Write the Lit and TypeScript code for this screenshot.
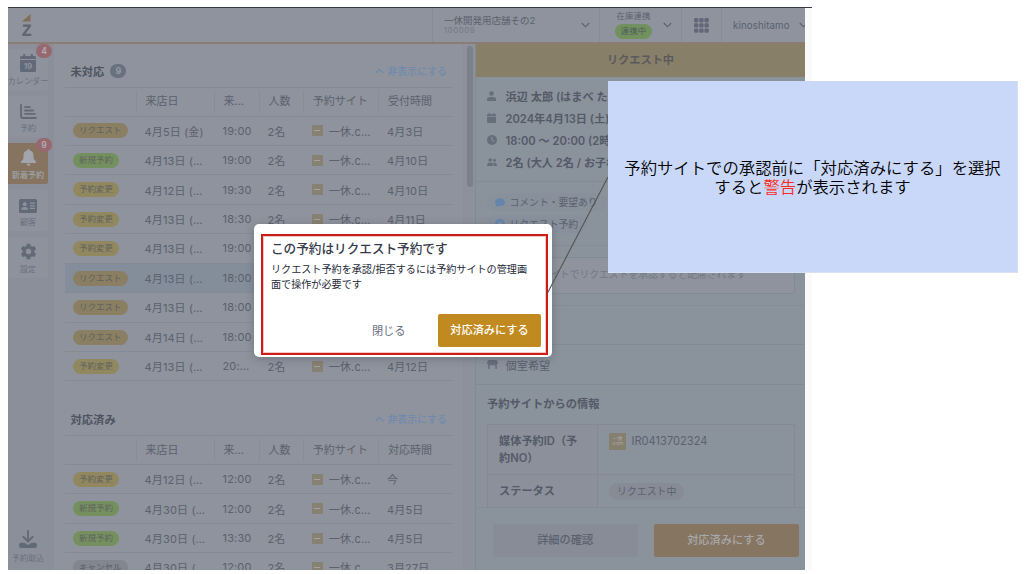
import { LitElement, html, css, svg } from "lit";
import { customElement } from "lit/decorators.js";
import { classMap } from "lit/directives/class-map.js";

type Row = { kind: string; date: string; time: string; at: string; active?: boolean };

const KIND: Record<string, string> = {
  リクエスト: "request",
  新規予約: "fresh",
  予約変更: "change",
  キャンセル: "cancel",
};

const OPEN_ROWS: Row[] = [
  { kind: "リクエスト", date: "4月5日 (金)", time: "19:00", at: "4月3日" },
  { kind: "新規予約", date: "4月13日 (…", time: "19:00", at: "4月10日" },
  { kind: "予約変更", date: "4月12日 (…", time: "19:30", at: "4月10日" },
  { kind: "予約変更", date: "4月13日 (…", time: "18:30", at: "4月11日" },
  { kind: "予約変更", date: "4月13日 (…", time: "19:00", at: "4月11日" },
  { kind: "リクエスト", date: "4月13日 (…", time: "18:00", at: "4月12日", active: true },
  { kind: "リクエスト", date: "4月13日 (…", time: "18:00", at: "4月12日" },
  { kind: "リクエスト", date: "4月14日 (…", time: "18:00", at: "4月12日" },
  { kind: "予約変更", date: "4月13日 (…", time: "20:…", at: "4月12日" },
];

const DONE_ROWS: Row[] = [
  { kind: "予約変更", date: "4月12日 (…", time: "12:00", at: "今" },
  { kind: "新規予約", date: "4月30日 (…", time: "12:00", at: "4月5日" },
  { kind: "新規予約", date: "4月30日 (…", time: "13:30", at: "4月5日" },
  { kind: "キャンセル", date: "4月30日 (…", time: "12:00", at: "3月27日" },
];

const icon = (w: number, h: number, box: string, body: unknown) =>
  html`<svg width=${w} height=${h} viewBox=${box} fill="currentColor">${body}</svg>`;

const chevron = (up = false) =>
  icon(
    9,
    6,
    "0 0 9 6",
    svg`<path d=${up ? "M.8 5 4.5 1.2 8.2 5" : "M.8 1 4.5 4.8 8.2 1"} fill="none" stroke="currentColor" stroke-width="1.1"/>`
  );

const calendarIcon = icon(
  16,
  18,
  "0 0 16 18",
  svg`<path d="M3.2 0h2v2h5.6V0h2v2h1.700Q16 2 16 3.500V5H0V3.500Q0 2 1.500 2h1.700zM0 6h16v10.500Q16 18 14.500 18h-13Q0 18 0 16.500z"/><text x="8" y="14.600" text-anchor="middle" font-family="Inter" font-size="8" font-weight="700" fill="#8d929d">19</text>`
);
const chartIcon = icon(
  17,
  15,
  "0 0 17 15",
  svg`<path d="M1 1v11q0 2 2 2h13M5 3.200h5M5 6.500h8M5 9.800h10" fill="none" stroke="currentColor" stroke-width="1.800" stroke-linecap="round"/>`
);
const bellIcon = icon(
  15,
  17,
  "0 0 15 17",
  svg`<path d="M7.500 0q1 0 1 1.200c2.600.5 4 2.400 4 5v3.300L15 12.700V14H0v-1.300l2.500-3.200V6.200c0-2.600 1.400-4.500 4-5Q6.500 0 7.500 0zM5.500 14.800h4q-.4 2-2 2t-2-2z"/>`
);
const cardIcon = icon(
  18,
  14,
  "0 0 18 14",
  svg`<rect width="18" height="14" rx="1.600"/><g fill="#8d929d"><circle cx="5.700" cy="5.200" r="1.900"/><path d="M2.300 10.800q0-2.800 3.400-2.800t3.400 2.800z"/><path d="M11 3.600h5v1.200h-5zM11 6.200h5v1.200h-5zM11 8.800h5V10h-5z"/></g>`
);
const gearIcon = icon(
  17,
  17,
  "0 0 24 24",
  svg`<path fill-rule="evenodd" d="M9.600 1h4.800l.7 3.300 2 1.100 3.200-1 2.400 4.100-2.500 2.300v2.400l2.500 2.300-2.400 4.100-3.200-1-2 1.100-.7 3.300H9.600l-.7-3.300-2-1.100-3.200 1-2.400-4.100 2.500-2.300v-2.400L1.300 8.500l2.400-4.100 3.200 1 2-1.100zM12 8.200a3.800 3.800 0 1 0 0 7.600 3.800 3.800 0 0 0 0-7.600z"/>`
);
const downloadIcon = icon(
  18,
  19,
  "0 0 18 19",
  svg`<path d="M9 1v10M4.300 6.800 9 11.400l4.700-4.600" fill="none" stroke="currentColor" stroke-width="1.900" stroke-linecap="round"/><path d="M2 12.800h3.400L9 15l3.600-2.200H16q2 0 2 2v1.200q0 2-2 2H2q-2 0-2-2v-1.200q0-2 2-2z"/>`
);
const personIcon = icon(
  9,
  10,
  "0 0 9 10",
  svg`<circle cx="4.500" cy="2.500" r="2.300"/><path d="M0 10V8.500Q0 6 3 6h3q3 0 3 2.500V10z"/>`
);
const dateIcon = icon(
  9,
  10,
  "0 0 9 10",
  svg`<path d="M1.500 0H3v1.200h3V0h1.500v1.200H9V3H0V1.200h1.500zM0 3.700h9V9q0 1-1 1H1Q0 10 0 9z"/>`
);
const clockIcon = icon(
  10,
  10,
  "0 0 10 10",
  svg`<circle cx="5" cy="5" r="5"/><path d="M5 2v3.200L7.200 6.500" fill="none" stroke="#8a929c" stroke-width="1"/>`
);
const peopleIcon = icon(
  10,
  8,
  "0 0 10 8",
  svg`<circle cx="3.200" cy="2" r="1.800"/><circle cx="7.500" cy="2.200" r="1.500"/><path d="M0 8q0-3.500 3.200-3.500T6.400 8zM7 8q0-2-1-3.200 4-.8 4 3.200z"/>`
);
const bubbleIcon = icon(
  10,
  9,
  "0 0 10 9",
  svg`<path d="M5 .3c2.800 0 5 1.700 5 3.900S7.800 8.100 5 8.100q-1 0-1.900-.3Q2 8.800.3 8.800 1.200 7.700 1.200 6.800 0 5.800 0 4.200C0 2 2.200.3 5 .3z"/>`
);
const helpIcon = icon(
  10,
  10,
  "0 0 10 10",
  svg`<circle cx="5" cy="5" r="5"/><circle cx="5" cy="4.800" r="2" fill="#8a929c"/>`
);
const roomIcon = icon(
  11,
  9,
  "0 0 11 9",
  svg`<path d="M2 0h7q1.200 0 1.400 1L11 4H9.800v5H8.400V5.600Q5.500 4.200 2.600 5.600V9H1.200V4H0l.6-3Q.8 0 2 0z"/>`
);

@customElement("request-list")
class RequestList extends LitElement {
  static properties = { heading: {}, count: {}, last: {}, rows: { attribute: false } };
  declare heading: string;
  declare count: string;
  declare last: string;
  declare rows: Row[];

  static styles = css`
    :host { display: block; color: #5b616e; }
    .top { display: flex; align-items: center; height: 32px; padding: 0 6px 0 5.500px; font-size: 11.300px; font-weight: 700; color: #4f5461; }
    .count { margin-left: 6px; width: 16px; height: 14px; border-radius: 7px; background: #69717f; color: #9399a3; font-size: 9px; line-height: 14px; text-align: center; }
    .toggle { margin-left: auto; display: flex; align-items: center; gap: 4px; color: #6a88b1; font-size: 9.800px; font-weight: 400; letter-spacing: 0.1px; }
    .grid { display: grid; grid-template-columns: 71px 78px 45px 44.300px 75.200px 1fr; align-items: center; border-top: 1px solid #858a96; box-sizing: border-box; }
    .head { height: 28.500px; font-size: 11px; color: #5c616e; }
    .head span { height: 23px; line-height: 23px; padding-left: 8.500px; border-left: 1px solid #878c98; white-space: nowrap; box-sizing: border-box; }
    .head span:first-child { border: 0; }
    .row { height: 29.450px; font-size: 11px; letter-spacing: 0.16px; white-space: nowrap; }
    .row > span { padding-left: 8.500px; overflow: hidden; }
    .row > span:first-child { padding-left: 8px; }
    .active { background: #848e9a; }
    .site { display: flex; align-items: center; gap: 6px; }
    .mark { width: 11px; height: 11px; background: #878173; display: flex; align-items: center; justify-content: center; }
    .mark::before { content: ""; width: 6px; height: 1px; background: #a5a39f; }
    .badge { display: inline-block; height: 15px; line-height: 15px; padding: 0 6px; border-radius: 8px; font-size: 8.500px; letter-spacing: 0; font-weight: 400; color: #5e625f; vertical-align: middle; }
    .request { background: #8a7f62; }
    .change { background: #91885f; }
    .fresh { background: #75905f; }
    .cancel { background: #82868e; color: #5b5f69; }
    .end { border-bottom: 1px solid #858a96; }
  `;

  render() {
    return html`
      <div class="top">
        ${this.heading}${this.count ? html`<span class="count">${this.count}</span>` : ""}
        <span class="toggle">${chevron(true)}非表示にする</span>
      </div>
      <div class="grid head">
        <span></span><span>来店日</span><span>来…</span><span>人数</span><span>予約サイト</span><span>${this.last}</span>
      </div>
      ${this.rows.map(
        (r) => html`<div class=${classMap({ grid: true, row: true, active: !!r.active })}>
          <span><b class="badge ${KIND[r.kind]}">${r.kind}</b></span>
          <span>${r.date}</span><span>${r.time}</span><span>2名</span>
          <span class="site"><i class="mark"></i>一休.c…</span><span>${r.at}</span>
        </div>`
      )}
      <div class="end"></div>
    `;
  }
}

@customElement("app-root")
class AppRoot extends LitElement {
  static styles = css`
    :host { display: block; position: relative; width: 1033px; height: 574px; overflow: hidden; background: #fff; font-family: Inter, "Noto Sans CJK JP", sans-serif; font-weight: 400; color: #5b616e; }
    * { box-sizing: border-box; }
    svg { display: block; flex: none; }
    .page { display: flex; flex-direction: column; height: 574px; }
    .edge { width: 804px; height: 1px; margin: 7px 0 0 8px; background: #363b48; flex: none; }
    .frame { width: 804px; height: 562px; margin-left: 8px; border-right: 7px solid #fafafa; display: flex; flex-direction: column; background: #8e939d; flex: none; }
    header { height: 36px; border-bottom: 2px solid #8b7d74; display: flex; flex: none; background: #8e939d; }
    .logo { padding: 6px 0 0 14px; flex: 1; }
    .cell { border-left: 1px solid #868b96; display: flex; align-items: center; height: 34px; white-space: nowrap; }
    .shop { width: 167px; padding: 0 9px 0 11px; justify-content: space-between; font-size: 9.500px; line-height: 11px; }
    .shop small { display: block; font-size: 7.800px; line-height: 9px; color: #747986; letter-spacing: 0.600px; }
    .stock { width: 82px; padding-left: 15px; gap: 11px; font-size: 8.500px; line-height: 11px; text-align: center; }
    .on { width: 37px; height: 15px; margin-top: 2px; line-height: 15px; border-radius: 8px; background: #71915f; color: #515b5b; }
    .apps { width: 40px; justify-content: center; }
    .user { width: 84px; padding-left: 11px; gap: 9px; font-size: 9.700px; overflow: hidden; letter-spacing: 0.12px; }
    .main { display: flex; flex: 1; min-height: 0; }
    nav { width: 46px; background: #8a8f9a; padding-top: 5px; display: flex; flex-direction: column; gap: 6px; flex: none; }
    .tile { position: relative; width: 40px; height: 41px; background: #8d929d; border-radius: 0 2px 2px 0; display: flex; flex-direction: column; align-items: center; justify-content: flex-end; color: #626a78; font-size: 8.100px; line-height: 12px; white-space: nowrap; padding-bottom: 3.500px; gap: 3px; }
    .tile.on-tile { background: #867461; color: #a2a5ac; font-weight: 700; }
    .tile span { color: #6a717e; }
    .tile.on-tile span { color: #9b9ca0; }
    .tile.bottom { margin: auto 0 4px; background: none; padding-bottom: 2px; }
    .dot { position: absolute; left: 28px; top: -5px; width: 16px; height: 14px; border-radius: 7px; background: #97686e; color: #b0b0b7; font: 600 8.500px/14px Inter, sans-serif; text-align: center; }
    .list { width: 409px; padding: 11px 10px 0 11px; overflow: hidden; flex: none; font-weight: 400; }
    .list request-list + request-list { margin-top: 22px; }
    .track { width: 12px; border-left: 1px solid #8a8f9a; padding: 2px 0 0 3px; background: #8c919b; flex: none; }
    .thumb { width: 6px; height: 141px; border-radius: 3px; background: #7b808a; }
    .detail { flex: 1; min-width: 0; border-left: 1px solid #848995; background: #8a929c; display: flex; flex-direction: column; }
    .band { height: 33px; background: #887f69; color: #5a5a5d; text-align: center; font-size: 11.200px; font-weight: 700; line-height: 32px; flex: none; }
    .info { height: 105px; padding: 8px 0 0 11px; border-bottom: 1px solid #838b96; flex: none; }
    .line { height: 22px; display: flex; align-items: center; gap: 7.500px; font-size: 11.200px; font-weight: 600; color: #545a67; white-space: nowrap; }
    .line i { width: 11px; color: #666d7b; display: flex; }
    .tags { height: 64px; padding: 11px 0 0 11px; border-bottom: 1px solid #858c97; display: flex; flex-direction: column; align-items: flex-start; gap: 4px; flex: none; }
    .tag { height: 18px; border-radius: 9px; padding: 0 9px 0 8px; background: #87909b; display: flex; align-items: center; gap: 4.500px; font-size: 9.800px; white-space: nowrap; }
    .tag svg { color: #6684ac; }
    .seat { height: 60px; padding: 11px 10px 11px 11px; border-bottom: 1px solid #858c97; flex: none; }
    .notice { height: 37px; border: 1px solid #848a95; border-radius: 3px; background: #8e939d; color: #737985; font-size: 9.800px; line-height: 34px; text-align: right; padding-right: 48px; white-space: nowrap; }
    .blank { height: 39px; border-bottom: 1px solid #828a95; flex: none; }
    .room { height: 40px; border-bottom: 1px solid #828a95; padding-left: 11px; display: flex; align-items: center; gap: 7.500px; font-size: 11.200px; flex: none; color: #5a606c; }
    .room svg { color: #666d7b; }
    .source { flex: 1; min-height: 0; overflow: hidden; padding: 0 10px 0 11px; }
    h3 { margin: 0; height: 39px; line-height: 39px; font-size: 11.250px; font-weight: 700; color: #545a67; }
    .table { display: grid; grid-template-columns: 110px 1fr; grid-template-rows: 50px 50px; border: 1px solid #848995; font-size: 11.200px; line-height: 16.500px; }
    .table > div { padding: 8px 11px; border-bottom: 1px solid #848995; display: flex; align-items: flex-start; }
    .table .k { background: #8b909b; border-right: 1px solid #848995; font-weight: 600; color: #545a67; }
    .table .v { font-size: 11.100px; gap: 5.500px; }
    .brand { width: 17px; height: 17px; background: #867f70; color: #aaa9a5; font-size: 5px; line-height: 5px; text-align: center; padding-top: 3px; }
    .chip { height: 17px; line-height: 17px; border-radius: 9px; background: #868b96; padding: 0 8px; font-size: 9.900px; }
    footer { height: 63px; border-top: 1px solid #848b96; padding: 16px 6px 13px 16.500px; display: flex; gap: 16px; flex: none; }
    .btn { flex: 1; height: 33px; border-radius: 2px; background: #878c97; text-align: center; line-height: 33px; font-size: 11.200px; font-weight: 500; }
    .btn.gold { background: #867561; color: #a7a8aa; }
    .dialog { position: absolute; left: 254px; top: 224px; width: 298px; height: 133px; background: #fff; border-radius: 5px; box-shadow: 0 2px 8px rgba(50, 55, 70, 0.3); padding: 10px 4px 2px 7px; }
    .alert { height: 121px; border: 2px solid #ce1d19; box-shadow: 0 0 0 1px #f3c9c7 inset; padding: 5px 5px 0 8px; color: #252a3a; display: flex; flex-direction: column; }
    h2 { margin: 0; font-size: 12.620px; line-height: 16px; font-weight: 500; color: #353a49; white-space: nowrap; }
    p { margin: 5px 0 0; font-size: 10.100px; line-height: 15px; white-space: nowrap; }
    .acts { margin-top: auto; padding-bottom: 6px; display: flex; justify-content: flex-end; align-items: center; gap: 32.500px; font-size: 11.200px; line-height: 32px; color: #687080; }
    .primary { width: 103px; height: 33px; border-radius: 2px; background: #c08a20; color: #fff; font-weight: 500; text-align: center; }
    .pointer { position: absolute; left: 546px; top: 176px; }
    .callout { position: absolute; left: 608px; top: 81px; width: 410px; height: 192px; background: #c9d8f8; border: solid #d6e0f5; border-width: 0 1px 1px 0; color: #000; font: 350 16.360px/19px "Noto Sans CJK JP", sans-serif; text-align: center; padding-top: 77px; white-space: nowrap; }
    .callout em { color: #fb2a1c; font-style: normal; }
  `;

  render() {
    const tile = (pic: unknown, label: string, n = "", cls = "") =>
      html`<div class="tile ${cls}">${pic}<span>${label}</span>${n ? html`<b class="dot">${n}</b>` : ""}</div>`;
    return html`
      <div class="page">
        <div class="edge"></div>
        <div class="frame">
          <header>
            <div class="logo">
              ${icon(10, 22, "0 0 10 22", svg`<path d="M8.500 0v7.500H0z" fill="#826d59"/><path d="M1 10.500h8v1.900L3.400 19.800H9.300V22H.3v-2L6 12.700H1z" fill="#626570"/>`)}
            </div>
            <div class="cell shop"><div>一休開発用店舗その2<small>100009</small></div>${chevron()}</div>
            <div class="cell stock"><div>在庫連携<div class="on">連携中</div></div>${chevron()}</div>
            <div class="cell apps">
              ${icon(15, 15, "0 0 15 15", [0, 5.2, 10.4].map((y) => [0, 5.2, 10.4].map((x) => svg`<rect x=${x} y=${y} width="4.400" height="4.400" rx="1.300" fill="#626877"/>`)))}
            </div>
            <div class="cell user">kinoshitamo ${chevron()}</div>
          </header>
          <div class="main">
            <nav>
              ${tile(calendarIcon, "カレンダー", "4")} ${tile(chartIcon, "予約")}
              ${tile(bellIcon, "新着予約", "9", "on-tile")} ${tile(cardIcon, "顧客")} ${tile(gearIcon, "設定")}
              ${tile(downloadIcon, "予約取込", "", "bottom")}
            </nav>
            <div class="list">
              <request-list heading="未対応" count="9" last="受付時間" .rows=${OPEN_ROWS}></request-list>
              <request-list heading="対応済み" last="対応時間" .rows=${DONE_ROWS}></request-list>
            </div>
            <div class="track"><div class="thumb"></div></div>
            <div class="detail">
              <div class="band">リクエスト中</div>
              <div class="info">
                <div class="line"><i>${personIcon}</i>浜辺 太郎 (はまべ たろう)</div>
                <div class="line"><i>${dateIcon}</i>2024年4月13日 (土)</div>
                <div class="line"><i>${clockIcon}</i>18:00 〜 20:00 (2時間)</div>
                <div class="line"><i>${peopleIcon}</i>2名 (大人 2名 / お子様 0名)</div>
              </div>
              <div class="tags">
                <div class="tag">${bubbleIcon}コメント・要望あり</div>
                <div class="tag">${helpIcon}リクエスト予約</div>
              </div>
              <div class="seat"><div class="notice">予約サイトでリクエストを承認すると配席されます</div></div>
              <div class="blank"></div>
              <div class="room">${roomIcon}個室希望</div>
              <div class="source">
                <h3>予約サイトからの情報</h3>
                <div class="table">
                  <div class="k">媒体予約ID（予<br />約NO）</div>
                  <div class="v"><span class="brand">一休<br />.com</span>IR0413702324</div>
                  <div class="k">ステータス</div>
                  <div class="v"><span class="chip">リクエスト中</span></div>
                </div>
              </div>
              <footer>
                <div class="btn">詳細の確認</div>
                <div class="btn gold">対応済みにする</div>
              </footer>
            </div>
          </div>
        </div>
      </div>
      <div class="dialog">
        <div class="alert">
          <h2>この予約はリクエスト予約です</h2>
          <p>リクエスト予約を承認/拒否するには予約サイトの管理画<br />面で操作が必要です</p>
          <div class="acts"><span>閉じる</span><span class="primary">対応済みにする</span></div>
        </div>
      </div>
      <svg class="pointer" width="63" height="120" viewBox="0 0 63 120"><path d="M1 118 62 1" stroke="#555550" stroke-width="1.100" /></svg>
      <div class="callout">予約サイトでの承認前に「対応済みにする」を選択<br />すると<em>警告</em>が表示されます</div>
    `;
  }
}
